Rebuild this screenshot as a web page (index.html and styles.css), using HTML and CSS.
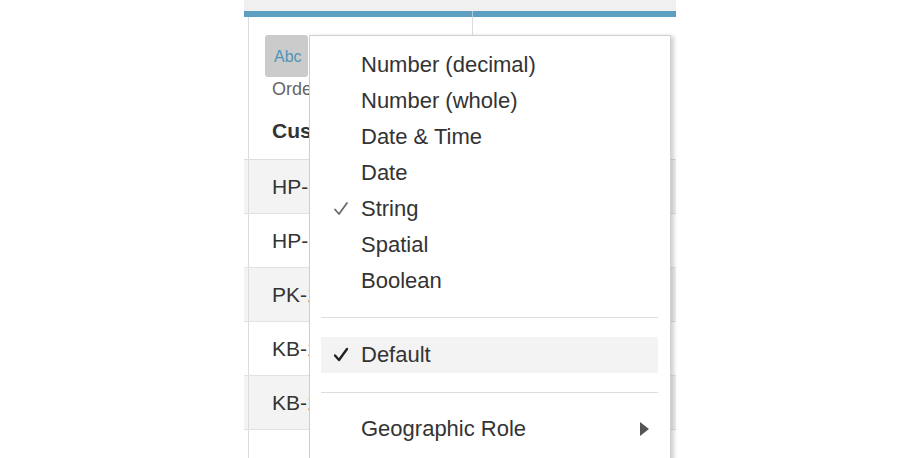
FILE: index.html
```html
<!DOCTYPE html>
<html>
<head>
<meta charset="utf-8">
<link rel="stylesheet" href="styles.css">
</head>
<body>
<div class="sheet">
  <div class="topband"></div>
  <div class="bluebar"><span class="bar-left"></span><span class="bar-right"></span></div>
  <div class="grid header">
    <div class="gutter"></div>
    <div class="cell hcell">
      <div class="badge">Abc</div>
      <div class="origin">Orders</div>
      <div class="fname">Customer ID</div>
    </div>
    <div class="cell"></div>
  </div>
  <div class="grid row alt"><div class="gutter"></div><div class="cell">HP-14815</div><div class="cell"></div></div>
  <div class="grid row"><div class="gutter"></div><div class="cell">HP-14815</div><div class="cell"></div></div>
  <div class="grid row alt"><div class="gutter"></div><div class="cell">PK-19075</div><div class="cell"></div></div>
  <div class="grid row"><div class="gutter"></div><div class="cell">KB-16585</div><div class="cell"></div></div>
  <div class="grid row alt"><div class="gutter"></div><div class="cell">KB-16585</div><div class="cell"></div></div>
  <div class="grid row"><div class="gutter"></div><div class="cell"></div><div class="cell"></div></div>
</div>

<div class="menu">
  <ul class="items first">
    <li class="item"><span class="check"></span>Number (decimal)</li>
    <li class="item"><span class="check"></span>Number (whole)</li>
    <li class="item"><span class="check"></span>Date &amp; Time</li>
    <li class="item"><span class="check"></span>Date</li>
    <li class="item"><span class="check"><svg width="16" height="16" viewBox="0 0 16 16"><polyline points="2,8.5 6,13 14,2" fill="none" stroke="#6b6b6b" stroke-width="1.8" stroke-linejoin="round" stroke-linecap="round"/></svg></span>String</li>
    <li class="item"><span class="check"></span>Spatial</li>
    <li class="item"><span class="check"></span>Boolean</li>
  </ul>
  <div class="sep sep1"></div>
  <ul class="items">
    <li class="item selected"><span class="check"><svg width="16" height="16" viewBox="0 0 16 16"><polyline points="2,8.5 6,13 14,2" fill="none" stroke="#222" stroke-width="2.4" stroke-linejoin="round" stroke-linecap="round"/></svg></span>Default</li>
  </ul>
  <div class="sep"></div>
  <ul class="items last">
    <li class="item sub"><span class="check"></span><span class="label">Geographic Role</span><span class="arrow"></span></li>
  </ul>
</div>
</body>
</html>
```

FILE: styles.css
```css
html, body {
  margin: 0;
  padding: 0;
  background: #ffffff;
  overflow: hidden;
}
body {
  width: 920px;
  height: 458px;
  font-family: "Liberation Sans", Arial, sans-serif;
  color: #333333;
}

.sheet {
  margin-left: 244px;
  width: 432px;
  display: flex;
  flex-direction: column;
}
.topband {
  height: 11px;
  background: #f0f0f0;
}
.bluebar {
  height: 6px;
  display: grid;
  grid-template-columns: 228px 1fr;
  column-gap: 1px;
  background: #a9cbdc;
}
.bar-left, .bar-right {
  background: #5e9ec1;
}

.grid {
  display: grid;
  grid-template-columns: 4px 224px 1fr;
}
.cell {
  border-left: 1px solid #dcdcdc;
  font-size: 21px;
  color: #333333;
  padding-left: 23px;
  display: flex;
  align-items: center;
  white-space: nowrap;
  overflow: hidden;
}
.header {
  height: 143px;
  border-bottom: 1px solid #dedede;
  box-sizing: border-box;
}
.hcell {
  flex-direction: column;
  align-items: flex-start;
  padding-left: 16px;
  padding-top: 18px;
}
.badge {
  width: 43px;
  height: 42px;
  box-sizing: border-box;
  background: #cbcbcb;
  border-radius: 3px;
  color: #4f94b7;
  font-size: 16px;
  line-height: 40px;
  padding-left: 9px;
  padding-top: 2px;
}
.origin {
  margin-left: 7px;
  margin-top: 1px;
  font-size: 18px;
  line-height: 22px;
  color: #666666;
}
.fname {
  margin-left: 7px;
  margin-top: 19px;
  font-size: 21px;
  font-weight: bold;
  line-height: 24px;
  color: #333333;
}

.row {
  height: 54px;
  border-bottom: 1px solid #e2e2e2;
  box-sizing: border-box;
}
.row.alt {
  background: #f3f3f3;
}

.menu {
  position: absolute;
  left: 309px;
  top: 35px;
  width: 362px;
  height: 440px;
  box-sizing: border-box;
  background: #ffffff;
  border: 1px solid #cfcfcf;
  box-shadow: 3px 1px 4px rgba(0, 0, 0, 0.18);
  padding: 11px 12px 0 11px;
}
.items {
  list-style: none;
  margin: 0;
  padding: 0;
}
.item {
  height: 36px;
  display: flex;
  align-items: center;
  font-size: 22px;
  color: #333333;
  padding-left: 12px;
}
.check {
  width: 16px;
  height: 16px;
  margin-right: 12px;
  display: flex;
}
.item.selected {
  background: #f3f3f3;
}
.sep {
  height: 1px;
  background: #dddddd;
  margin: 19px 0;
}
.sep.sep1 {
  margin-top: 18px;
}
.item.sub .label {
  flex: 1;
}
.arrow {
  width: 0;
  height: 0;
  border-top: 7px solid transparent;
  border-bottom: 7px solid transparent;
  border-left: 9px solid #555555;
  margin-right: 9px;
}
.items.last {
  margin-top: -1px;
}
```
